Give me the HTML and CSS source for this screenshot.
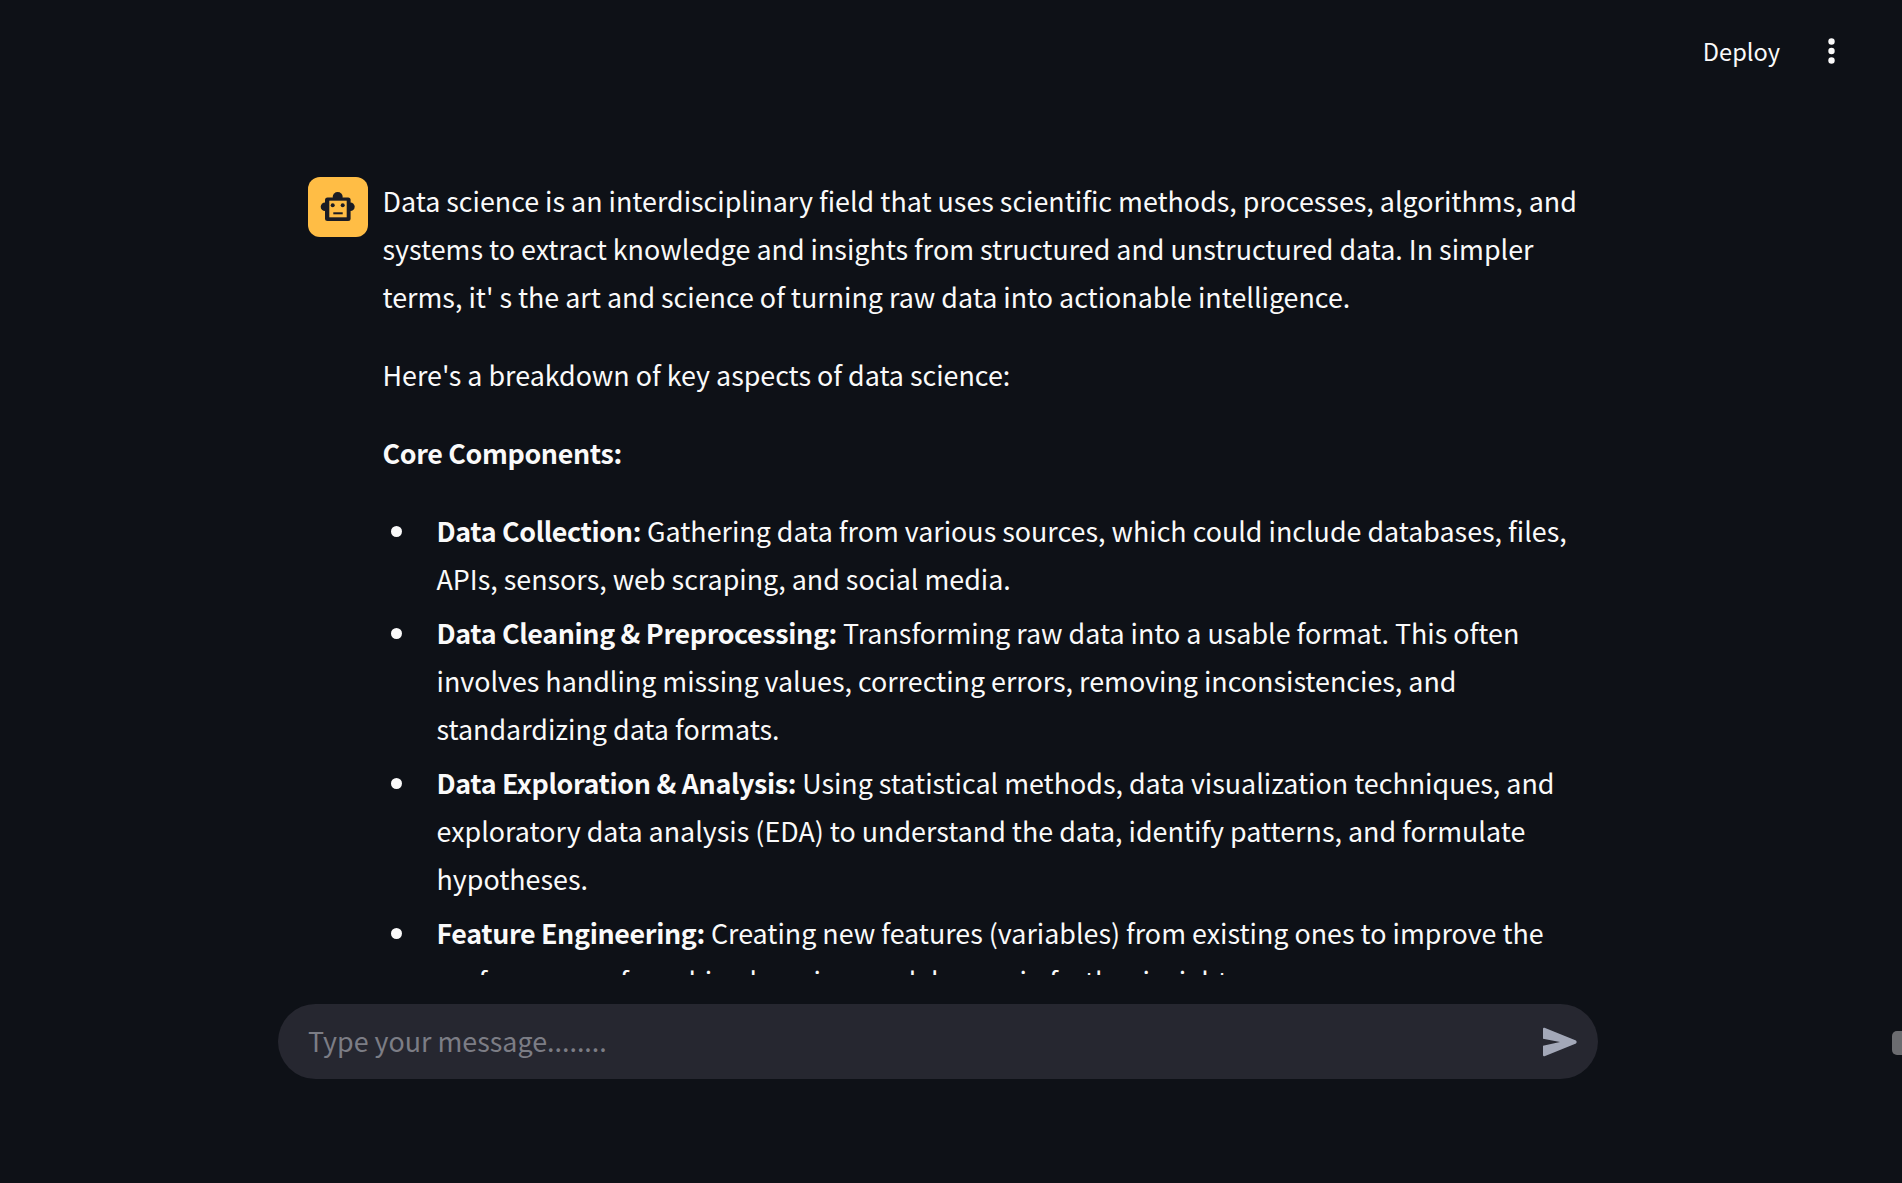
FILE: index.html
```html
<!DOCTYPE html>
<html lang="en">
<head>
  <meta charset="UTF-8" />
  <title>Chat</title>
  <link rel="stylesheet" href="styles.css">
</head>
<body>
  <header class="top-bar">
    <span class="deploy">Deploy</span>
    <svg class="menu-icon" width="10" height="26" viewBox="0 0 10 26"><circle cx="5.500" cy="3.500" r="3.200"/><circle cx="5.500" cy="13" r="3.200"/><circle cx="5.500" cy="22.500" r="3.200"/></svg>
  </header>
  <main class="chat-scroll">
    <div class="message">
      <div class="avatar">
        <svg width="36" height="36" viewBox="0 0 36 36">
          <circle class="bot" cx="17.700" cy="8" r="5"/>
          <circle class="bot" cx="5" cy="17.700" r="4.300"/>
          <circle class="bot" cx="30.400" cy="17.700" r="4.300"/>
          <rect class="bot" x="5" y="8.500" width="25.600" height="23.500" rx="2.500"/>
          <rect class="bot-face" x="9.300" y="11.700" width="17.400" height="16.600"/>
          <circle class="bot" cx="12.700" cy="16.300" r="2"/>
          <circle class="bot" cx="22.700" cy="16.300" r="2"/>
          <rect class="bot" x="13.300" y="23.300" width="9.400" height="2"/>
        </svg>
      </div>
      <div class="message-body">
        <p>Data science is an interdisciplinary field that uses scientific methods, processes, algorithms, and systems to extract knowledge and insights from structured and unstructured data. In simpler terms, it' s the art and science of turning raw data into actionable intelligence.</p>
        <p>Here's a breakdown of key aspects of data science:</p>
        <p><strong>Core Components:</strong></p>
        <ul>
          <li><strong>Data Collection:</strong> Gathering data from various sources, which could include databases, files, APIs, sensors, web scraping, and social media.</li>
          <li><strong>Data Cleaning &amp; Preprocessing:</strong> Transforming raw data into a usable format. This often involves handling missing values, correcting errors, removing inconsistencies, and standardizing data formats.</li>
          <li><strong>Data Exploration &amp; Analysis:</strong> Using statistical methods, data visualization techniques, and exploratory data analysis (EDA) to understand the data, identify patterns, and formulate hypotheses.</li>
          <li><strong>Feature Engineering:</strong> Creating new features (variables) from existing ones to improve the performance of machine learning models or gain further insights.</li>
        </ul>
      </div>
    </div>
  </main>
  <footer class="chat-input-wrap">
    <div class="chat-input">
      <span class="placeholder">Type your message........</span>
      <svg class="send-icon" width="36" height="30" viewBox="0 0 36 30"><path d="M2.500 0.800 L34 13.500 Q35.500 15 34 16.500 L2.500 29.200 Q1 29.700 1 28 V18.800 L18 15 L1 11.800 V2 Q1 0.300 2.500 0.800z"/></svg>
    </div>
  </footer>
  <div class="scroll-thumb"></div>
</body>
</html>
```

FILE: styles.css
```css
* {
  box-sizing: border-box;
}
html, body {
  height: 100%;
}
body {
  margin: 0;
  background-color: #0e1117;
  color: #fafafa;
  font-family: "Noto Sans CJK SC", "Noto Sans", sans-serif;
  font-size: 26.85px;
  line-height: 48px;
  overflow: hidden;
  position: relative;
}
.top-bar {
  height: 101px;
  display: flex;
  justify-content: flex-end;
  align-items: center;
  padding-right: 66px;
  gap: 46px;
}
.deploy {
  font-size: 23.6px;
}
.menu-icon {
  fill: #fafafa;
}
.chat-scroll {
  height: 874px;
  overflow: hidden;
  padding: 76px 320px 0 308px;
}
.message {
  display: flex;
  gap: 14.5px;
}
.avatar {
  flex: none;
  width: 60px;
  height: 60px;
  border-radius: 12px;
  background-color: #ffbd45;
  display: flex;
  align-items: center;
  justify-content: center;
}
.bot {
  fill: #1a1c24;
}
.bot-face {
  fill: #ffbd45;
}
.message-body p {
  margin: 0 0 30px;
}
.message-body strong {
  font-weight: 600;
  letter-spacing: -0.35px;
}
.message-body ul {
  margin: 0;
  padding-left: 54px;
  list-style: none;
}
.message-body li {
  margin-bottom: 6px;
  position: relative;
}
.message-body li::before {
  content: "";
  position: absolute;
  left: -46px;
  top: 19px;
  width: 11px;
  height: 11px;
  border-radius: 50%;
  background-color: #fafafa;
}
.chat-input-wrap {
  padding: 29px 0 0 278px;
}
.chat-input {
  width: 1320px;
  height: 75px;
  border-radius: 37.5px;
  background-color: #262730;
  display: flex;
  align-items: center;
  justify-content: space-between;
  padding: 0 20px 0 30px;
}
.placeholder {
  color: #7c7d85;
  margin-top: -2px;
}
.send-icon {
  fill: #a3a8b8;
}
.scroll-thumb {
  position: absolute;
  right: 0;
  top: 1031px;
  width: 10px;
  height: 24px;
  border-radius: 5px 0 0 5px;
  background-color: #6b6c70;
}
```
